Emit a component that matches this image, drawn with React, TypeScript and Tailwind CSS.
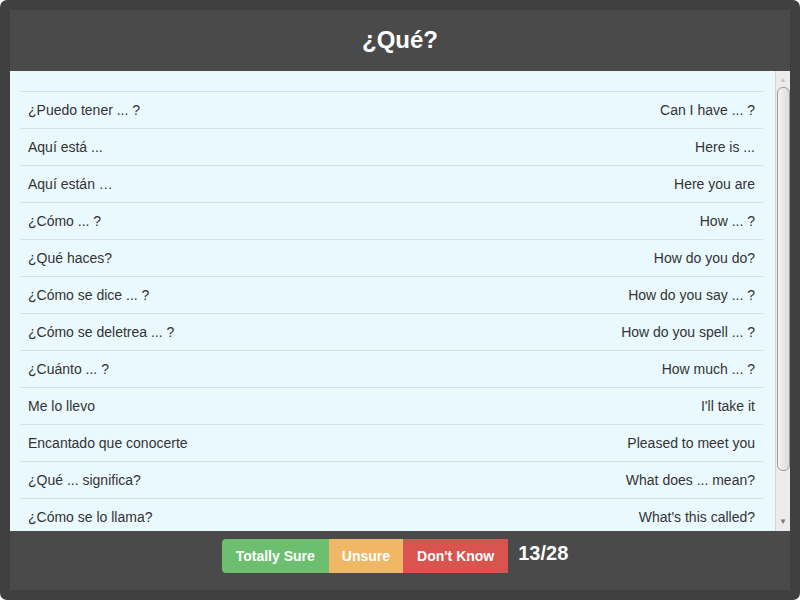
import React from 'react';

const PHRASES: [string, string][] = [
  ['¿Puedo tener ... ?', 'Can I have ... ?'],
  ['Aquí está ...', 'Here is ...'],
  ['Aquí están …', 'Here you are'],
  ['¿Cómo ... ?', 'How ... ?'],
  ['¿Qué haces?', 'How do you do?'],
  ['¿Cómo se dice ... ?', 'How do you say ... ?'],
  ['¿Cómo se deletrea ... ?', 'How do you spell ... ?'],
  ['¿Cuánto ... ?', 'How much ... ?'],
  ['Me lo llevo', "I'll take it"],
  ['Encantado que conocerte', 'Pleased to meet you'],
  ['¿Qué ... significa?', 'What does ... mean?'],
  ['¿Cómo se lo llama?', "What's this called?"],
];

const Scrollbar: React.FC = () => (
  <div className="w-[15px] h-full bg-[#ececec] border-l border-[#d6d6d6] flex flex-col items-center">
    <div className="h-[16px] flex items-center justify-center text-[7px] leading-none text-[#c4c4c4]">▲</div>
    <div className="w-[13px] h-[384px] rounded-[6px] border border-[#9a9a9a] bg-gradient-to-r from-[#f4f4f4] to-[#dcdcdc]" />
    <div className="flex-1" />
    <div className="h-[18px] flex items-center justify-center text-[8px] leading-none text-[#7a7a7a]">▼</div>
  </div>
);

const App: React.FC = () => {
  return (
    <div className="w-[800px] h-[602px] bg-white" style={{ fontFamily: '"Liberation Sans", Arial, sans-serif' }}>
      <div className="w-[800px] h-[600px] rounded-[7px] bg-[#404040] p-[10px]">
        <div className="h-full bg-[#4a4a4a] flex flex-col">
          {/* Header */}
          <div className="h-[61px] flex items-center justify-center">
            <h3 className="text-white font-bold text-[24px] leading-none pb-[2px]">¿Qué?</h3>
          </div>

          {/* Phrase list */}
          <div className="h-[460px] bg-[#eaf9fe] flex">
            <div className="flex-1 overflow-hidden pt-[20px] pl-[10px] pr-[12px]">
              {PHRASES.map(([es, en]) => (
                <div
                  key={es}
                  className="flex justify-between border-t border-[#d9e1e4] px-2 py-2 text-[14px] leading-[20px] text-[#333]"
                >
                  <span>{es}</span>
                  <span>{en}</span>
                </div>
              ))}
            </div>
            <Scrollbar />
          </div>

          {/* Footer */}
          <div className="flex-1 flex justify-center items-start pt-[8px] pr-[10px]">
            <div className="flex">
              <button className="h-[34px] px-[14px] bg-[#6cbf6f] text-white font-bold text-[14px] rounded-l-[4px]">
                Totally Sure
              </button>
              <button className="h-[34px] px-[13px] bg-[#f0b766] text-white font-bold text-[14px]">
                Unsure
              </button>
              <button className="h-[34px] px-[14px] bg-[#d9534f] text-white font-bold text-[14px]">
                Don't Know
              </button>
            </div>
            <span className="ml-[10px] text-white font-bold text-[20px] leading-[28px]">13/28</span>
          </div>
        </div>
      </div>
    </div>
  );
};

export default App;
